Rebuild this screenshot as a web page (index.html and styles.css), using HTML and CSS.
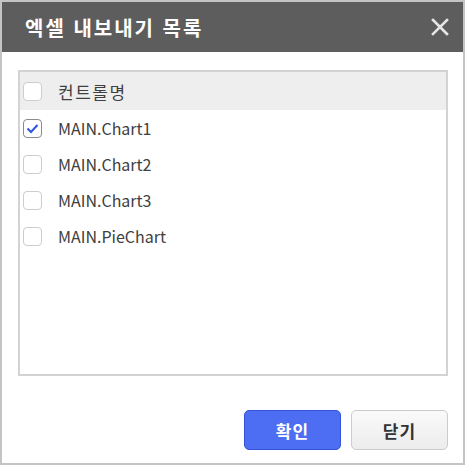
FILE: index.html
```html
<!DOCTYPE html>
<html lang="ko">
<head>
<meta charset="utf-8">
<link rel="stylesheet" href="styles.css">
</head>
<body>
<div class="dialog">
  <div class="header">
    <span class="title">엑셀 내보내기 목록</span>
    <svg class="close" width="18" height="18" viewBox="0 0 18 18"><path d="M2 2 L16 16 M16 2 L2 16" stroke="#e6e6e6" stroke-width="2.6" stroke-linecap="square"/></svg>
  </div>
  <div class="body">
    <div class="list">
      <div class="row head"><span class="cb"></span><span class="label ko">컨트롤명</span></div>
      <div class="row"><span class="cb checked"><svg width="13" height="11" viewBox="0 0 13 11"><path d="M1.5 5.5 L5 9 L11.5 2" fill="none" stroke="#2f55e0" stroke-width="2"/></svg></span><span class="label">MAIN.Chart1</span></div>
      <div class="row"><span class="cb"></span><span class="label">MAIN.Chart2</span></div>
      <div class="row"><span class="cb"></span><span class="label">MAIN.Chart3</span></div>
      <div class="row"><span class="cb"></span><span class="label">MAIN.PieChart</span></div>
    </div>
  </div>
  <div class="footer">
    <button class="btn primary">확인</button>
    <button class="btn">닫기</button>
  </div>
</div>
</body>
</html>
```
FILE: styles.css
```css
html, body { margin: 0; padding: 0; background: #fff; }
body { font-family: "Noto Sans CJK KR", "Noto Sans", sans-serif; }
.dialog {
  width: 465px; height: 465px; box-sizing: border-box;
  border: 2px solid #c4c4c4;
  display: flex; flex-direction: column;
}
.header {
  height: 50px; background: #5d5d5e;
  display: flex; align-items: center; justify-content: space-between;
  padding: 0 14px 0 23px; box-sizing: border-box;
}
.title { color: #fff; font-size: 20px; font-weight: 700; letter-spacing: 2px; }
.close { display: block; }
.body { padding: 18px 15px 0 16px; }
.list {
  height: 306px; box-sizing: border-box;
  border: 2px solid #d3d3d3;
}
.row {
  height: 36px; display: flex; align-items: center;
  padding-left: 3px; color: #404040; font-size: 16px;
}
.row.head { height: 38px; background: #eeeeee; }
.cb {
  width: 19px; height: 19px; box-sizing: border-box;
  border: 1.5px solid #cdcdcd; border-radius: 4px; background: #fff;
  display: flex; align-items: center; justify-content: center;
  margin-right: 16px;
}
.cb.checked { border-color: #8a8a8a; }
.label { line-height: 1; }
.label.ko { font-size: 17px; letter-spacing: 1.5px; }
.footer {
  display: flex; justify-content: flex-end; gap: 10px;
  padding: 0 15px 0 0; margin-top: 34px;
}
.btn {
  width: 97px; height: 40px; box-sizing: border-box;
  border: 1px solid #cbcbcb; border-radius: 5px;
  background: linear-gradient(#fafafa, #ececec);
  font-family: "Noto Sans CJK KR", sans-serif; font-size: 17px; font-weight: 700;
  letter-spacing: 1px;
  color: #333; padding: 0;
}
.btn.primary {
  background: #4d6ef2; border-color: #3354d6; color: #fff;
}
```
